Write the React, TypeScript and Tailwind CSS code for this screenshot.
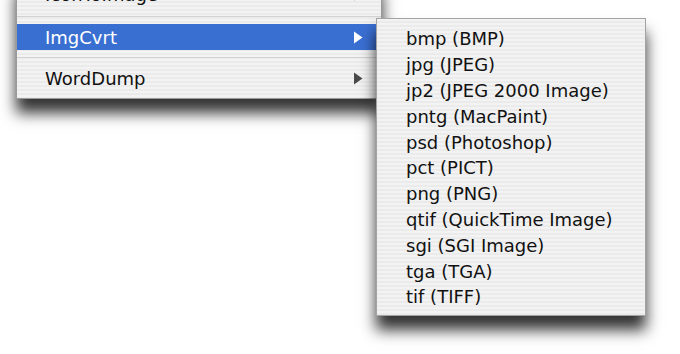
import React from 'react';

const formats = [
  'bmp (BMP)',
  'jpg (JPEG)',
  'jp2 (JPEG 2000 Image)',
  'pntg (MacPaint)',
  'psd (Photoshop)',
  'pct (PICT)',
  'png (PNG)',
  'qtif (QuickTime Image)',
  'sgi (SGI Image)',
  'tga (TGA)',
  'tif (TIFF)',
];

const stripes =
  'bg-[repeating-linear-gradient(180deg,#f3f3f3_0px,#f3f3f3_2px,#ebebeb_2px,#ebebeb_4px)]';

const Arrow = ({ color }: { color: string }) => (
  <svg width="10" height="13" viewBox="0 0 10 13">
    <path d="M1 0.5 L9.5 6.5 L1 12.5 Z" fill={color} />
  </svg>
);

const App = () => {
  return (
    <div className="relative w-[680px] h-[354px] bg-white overflow-hidden font-['DejaVu_Sans',sans-serif] text-[18px] text-[#111]">
      {/* parent menu, scrolled off the top */}
      <div
        className={`ml-[16px] -mt-[22px] w-[366px] pb-[6px] border border-[#9a9a9a] shadow-[0_14px_14px_rgba(0,0,0,0.8)] ${stripes}`}
      >
        <div className="h-[30px] flex items-center justify-between pl-[28px] pr-[18px]">
          <span>IconToImage</span>
          <Arrow color="#4a4a4a" />
        </div>
        <div className="h-[15px] flex items-center">
          <div className="h-px w-full bg-[#d2d2d2]" />
        </div>
        <div className="h-[26px] flex items-center justify-between pl-[28px] pr-[18px] bg-[#3a6fd2] text-white">
          <span className="pt-[1px]">ImgCvrt</span>
          <Arrow color="#ffffff" />
        </div>
        <div className="h-[14px] flex items-center">
          <div className="h-px w-full bg-[#d2d2d2]" />
        </div>
        <div className="h-[28px] flex items-center justify-between pl-[28px] pr-[18px]">
          <span>WordDump</span>
          <Arrow color="#4a4a4a" />
        </div>
      </div>

      {/* submenu */}
      <div
        className={`absolute left-[376px] top-[18px] w-[270px] pt-[7px] pb-[5px] border border-[#a3a3a3] shadow-[0_14px_14px_rgba(0,0,0,0.8)] ${stripes}`}
      >
        {formats.map((f) => (
          <div key={f} className="h-[25.8px] flex items-center pl-[29px] whitespace-nowrap">
            {f}
          </div>
        ))}
      </div>
    </div>
  );
};

export default App;
